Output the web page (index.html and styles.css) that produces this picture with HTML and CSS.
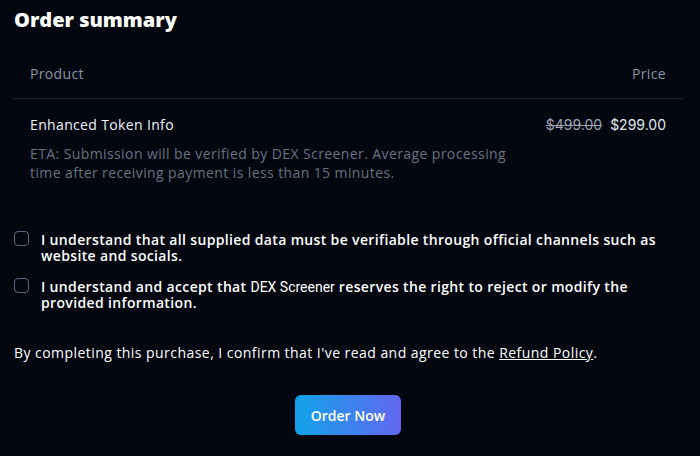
FILE: index.html
```html
<!DOCTYPE html>
<html>
<head>
<meta charset="utf-8">
<link rel="stylesheet" href="styles.css">
</head>
<body>
<div class="page">
  <h1 class="title">Order summary</h1>
  <div class="table">
    <div class="row head">
      <span>Product</span>
      <span>Price</span>
    </div>
    <div class="row item">
      <div class="info">
        <div class="name">Enhanced Token Info</div>
        <div class="eta">ETA: Submission will be verified by DEX Screener. Average processing time after receiving payment is less than 15 minutes.</div>
      </div>
      <div class="prices"><s class="old">$499.00</s><span class="new">$299.00</span></div>
    </div>
  </div>
  <div class="checks">
    <label class="check"><span class="box"></span><span class="ctext">I understand that all supplied data must be verifiable through official channels such as website and socials.</span></label>
    <label class="check"><span class="box"></span><span class="ctext">I understand and accept that <span class="brand">DEX Screener</span> reserves the right to reject or modify the provided information.</span></label>
  </div>
  <p class="confirm">By completing this purchase, I confirm that I've read and agree to the <a href="#" class="link">Refund Policy</a>.</p>
  <div class="actions"><button class="btn">Order Now</button></div>
</div>
</body>
</html>
```
FILE: styles.css
```css
html, body { margin: 0; padding: 0; background: #02060f; }
body { font-family: "Open Sans", "DejaVu Sans", sans-serif; color: #fff; width: 700px; height: 456px; overflow: hidden; }
.page { padding: 0 18px 0 14px; }
.title { margin: 0; padding-top: 6px; font-size: 20px; font-weight: 800; line-height: 28px; }
.table { margin-top: 20px; }
.row { display: flex; justify-content: space-between; padding: 0 16px; }
.head { font-size: 14px; letter-spacing: 0.35px; color: #8b95a8; border-bottom: 1px solid #1d2636; align-items: flex-start; line-height: 18px; padding-top: 11px; box-sizing: border-box; height: 45px; }
.item { padding-top: 17px; }
.name { font-size: 14px; letter-spacing: 0.35px; line-height: 18px; color: #f1f5f9; font-weight: 500; }
.eta { margin-top: 10px; font-size: 14px; letter-spacing: 0.4px; line-height: 19px; color: #6b7280; width: 490px; }
.prices { font-family: Inter, "Liberation Sans", sans-serif; font-size: 14px; line-height: 18px; display: flex; gap: 8px; }
.old { color: #9ca3af; }
.new { color: #e2e8f0; }
.checks { margin-top: 50px; display: flex; flex-direction: column; gap: 15px; }
.check { display: flex; gap: 12px; align-items: flex-start; }
.box { flex: none; width: 13px; height: 13px; border: 1.5px solid #5a6880; border-radius: 4px; margin-top: -1px; }
.ctext { font-size: 14px; font-weight: 600; letter-spacing: 0.35px; line-height: 16px; color: #fff; }
.brand { font-family: Roboto, sans-serif; font-weight: 400; letter-spacing: 0; }
.confirm { margin: 32px 0 0; font-size: 14px; letter-spacing: 0.45px; line-height: 20px; }
.link { color: #fff; text-decoration: underline; }
.actions { display: flex; justify-content: center; margin-top: 32px; }
.btn { font-family: inherit; width: 106px; height: 40px; border: 0; border-radius: 6px; background: linear-gradient(90deg, #11a3e9, #6366f1); color: #fff; font-size: 14px; font-weight: 600; }
```
